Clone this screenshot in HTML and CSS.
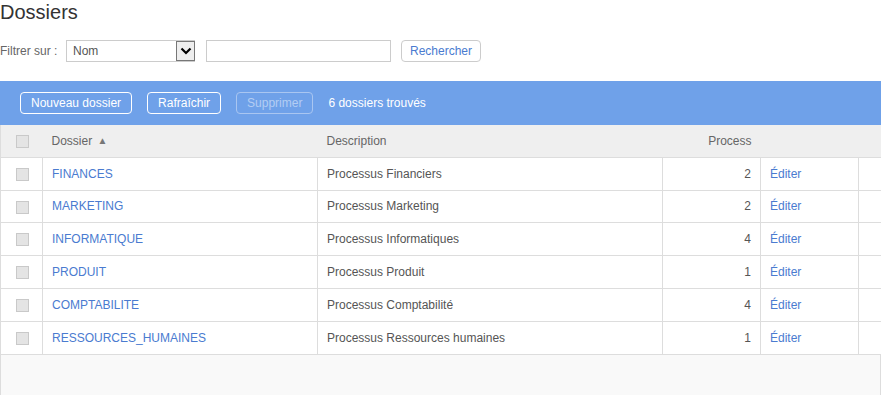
FILE: index.html
```html
<!DOCTYPE html>
<html lang="fr">
<head>
<meta charset="utf-8">
<title>Dossiers</title>
<link rel="stylesheet" href="styles.css">
</head>
<body>
<h1 class="title">Dossiers</h1>
<div class="filter">
  <span class="filter-label">Filtrer sur :</span>
  <div class="select">
    <span class="select-value">Nom</span>
    <span class="select-arrow"><svg width="12" height="8" viewBox="0 0 12 8"><path d="M1.5 1.5 L6 6 L10.5 1.5" fill="none" stroke="#000" stroke-width="2.2"/></svg></span>
  </div>
  <div class="text-input"></div>
  <button class="btn-search">Rechercher</button>
</div>
<div class="toolbar">
  <button class="tb-btn">Nouveau dossier</button>
  <button class="tb-btn">Rafraîchir</button>
  <button class="tb-btn disabled">Supprimer</button>
  <span class="count">6 dossiers trouvés</span>
</div>
<table class="grid">
  <colgroup>
    <col class="c-check"><col class="c-name"><col class="c-desc"><col class="c-proc"><col class="c-edit"><col class="c-end">
  </colgroup>
  <thead>
    <tr>
      <th class="check"><span class="box"></span></th>
      <th>Dossier <span class="sort">▲</span></th>
      <th>Description</th>
      <th class="num">Process</th>
      <th></th>
      <th></th>
    </tr>
  </thead>
  <tbody>
    <tr><td class="check"><span class="box"></span></td><td><a>FINANCES</a></td><td>Processus Financiers</td><td class="num">2</td><td><a>Éditer</a></td><td></td></tr>
    <tr><td class="check"><span class="box"></span></td><td><a>MARKETING</a></td><td>Processus Marketing</td><td class="num">2</td><td><a>Éditer</a></td><td></td></tr>
    <tr><td class="check"><span class="box"></span></td><td><a>INFORMATIQUE</a></td><td>Processus Informatiques</td><td class="num">4</td><td><a>Éditer</a></td><td></td></tr>
    <tr><td class="check"><span class="box"></span></td><td><a>PRODUIT</a></td><td>Processus Produit</td><td class="num">1</td><td><a>Éditer</a></td><td></td></tr>
    <tr><td class="check"><span class="box"></span></td><td><a>COMPTABILITE</a></td><td>Processus Comptabilité</td><td class="num">4</td><td><a>Éditer</a></td><td></td></tr>
    <tr><td class="check"><span class="box"></span></td><td><a>RESSOURCES_HUMAINES</a></td><td>Processus Ressources humaines</td><td class="num">1</td><td><a>Éditer</a></td><td></td></tr>
  </tbody>
</table>
<div class="grid-footer"></div>
</body>
</html>
```
FILE: styles.css
```css
* { box-sizing: border-box; }
body {
  margin: 0;
  width: 881px;
  font-family: "Liberation Sans", Arial, sans-serif;
  font-size: 12px;
  color: #555;
  background: #fff;
}
.title {
  margin: 0;
  height: 40px;
  line-height: 24px;
  font-size: 20px;
  font-weight: normal;
  color: #333;
}
.filter {
  display: flex;
  align-items: center;
  height: 22px;
  margin-bottom: 19px;
}
.filter-label {
  color: #666;
  width: 66px;
}
.select {
  display: flex;
  align-items: center;
  justify-content: space-between;
  width: 129px;
  height: 22px;
  border: 1px solid #ccc;
  padding: 0 0 0 6px;
  color: #555;
}
.select-arrow {
  display: flex;
  align-items: center;
  justify-content: center;
  width: 19px;
  height: 20px;
  border: 1px solid #777;
  background: #eee;
  margin-right: -1px;
}
.text-input {
  width: 185px;
  height: 22px;
  border: 1px solid #ccc;
  margin-left: 11px;
}
.btn-search {
  margin-left: 10px;
  height: 22px;
  width: 80px;
  padding: 0;
  border: 1px solid #ccc;
  border-radius: 4px;
  background: #fff;
  color: #4a7bd0;
  font-family: inherit;
  font-size: 12px;
}
.toolbar {
  display: flex;
  align-items: center;
  height: 44px;
  background: #6fa1e9;
  padding-left: 20px;
  gap: 15px;
}
.tb-btn {
  height: 22px;
  padding: 0 10px;
  border: 1px solid #fff;
  border-radius: 4px;
  background: transparent;
  color: #fff;
  font-family: inherit;
  font-size: 12px;
}
.tb-btn.disabled {
  border-color: #a9c6f1;
  color: #b3cdf3;
}
.count { color: #fff; }
.grid {
  width: 881px;
  border-collapse: collapse;
  table-layout: fixed;
  border-left: 1px solid #ddd;
  border-right: 1px solid #ddd;
}
.c-check { width: 42px; }
.c-name { width: 275px; }
.c-desc { width: 345px; }
.c-proc { width: 98px; }
.c-edit { width: 98px; }
.c-end { width: 23px; }
.grid th {
  height: 32px;
  background: #efefef;
  border-bottom: 1px solid #ddd;
  text-align: left;
  font-weight: normal;
  color: #666;
  padding: 0 9px;
}
.grid td {
  height: 33px;
  border: 1px solid #ddd;
  border-top: none;
  padding: 0 9px;
  white-space: nowrap;
}
.grid tbody tr:nth-child(2) td { height: 32px; }
.grid td:first-child { border-left: none; }
.grid td:last-child { border-right: none; }
.grid .check { padding: 0 0 0 15px; }
.grid .num { text-align: right; }
.box {
  display: block;
  width: 13px;
  height: 13px;
  border: 1px solid #c9c9c9;
  background: #e4e4e4;
  margin-top: 2px;
}
.sort {
  font-size: 10px;
  color: #777;
  margin-left: 2px;
  vertical-align: 1px;
}
.grid a {
  color: #4a7bd0;
}
.grid-footer {
  width: 881px;
  height: 41px;
  background: #f9f9f9;
  border: 1px solid #ddd;
  border-top: none;
}
```
